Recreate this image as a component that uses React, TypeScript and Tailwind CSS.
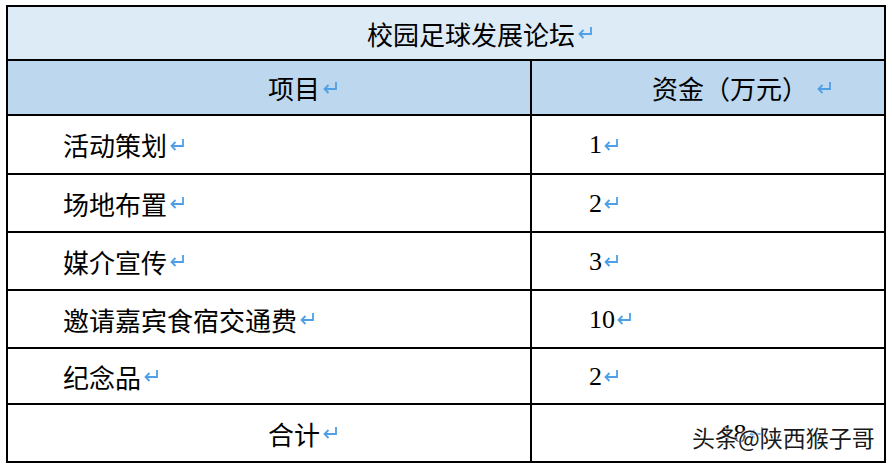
import React from "react";

const cjk = { fontFamily: '"Noto Sans CJK SC", sans-serif' };
const num = { fontFamily: '"Liberation Serif", "Noto Sans CJK SC", serif' };

// Word paragraph mark
function Mark({ className = "" }: { className?: string }) {
  return (
    <svg
      width="16"
      height="14"
      viewBox="0 0 16 14"
      className={"shrink-0 -mr-[16px] " + className}
      fill="none"
      stroke="#4f9fe6"
      strokeWidth="1.8"
    >
      <path d="M14 1 V8 H2.5" />
      <path d="M6.5 4 L2.5 8 L6.5 12" />
    </svg>
  );
}

const rows = [
  { item: "活动策划", amount: "1", h: "h-[59px]" },
  { item: "场地布置", amount: "2", h: "h-[58px]" },
  { item: "媒介宣传", amount: "3", h: "h-[58px]" },
  { item: "邀请嘉宾食宿交通费", amount: "10", h: "h-[58px]" },
  { item: "纪念品", amount: "2", h: "h-[56px]" },
];

export default function App() {
  return (
    <div className="relative w-[892px] h-[466px] bg-white overflow-hidden text-black" style={cjk}>
      <div className="ml-[6px] mt-[5px] w-[880px] border-2 border-black flex flex-col">
        {/* title */}
        <div className="h-[52px] bg-[#ddebf7] flex items-center justify-center pl-[52px] text-[26px]">
          <span>校园足球发展论坛</span>
          <Mark className="ml-[2px]" />
        </div>

        {/* header */}
        <div className="h-[55px] border-t-2 border-black bg-[#bdd7ee] flex text-[26px]">
          <div className="w-[524px] border-r-2 border-black flex items-center justify-center pl-[52px]">
            <span>项目</span>
            <Mark className="ml-[2px]" />
          </div>
          <div className="flex-1 flex items-center justify-center pl-[52px]">
            <span>资金（万元）</span>
            <Mark className="ml-[8px]" />
          </div>
        </div>

        {rows.map((r) => (
          <div key={r.item} className={"border-t-2 border-black flex text-[26px] " + r.h}>
            <div className="w-[524px] border-r-2 border-black flex items-center pl-[55px]">
              <span>{r.item}</span>
              <Mark className="ml-[2px]" />
            </div>
            <div className="flex-1 flex items-center pl-[57px]">
              <span style={num}>{r.amount}</span>
              <Mark className="ml-[1px]" />
            </div>
          </div>
        ))}

        {/* total */}
        <div className="h-[58px] border-t-2 border-black flex text-[26px]">
          <div className="w-[524px] border-r-2 border-black flex items-center justify-center pl-[52px]">
            <span>合计</span>
            <Mark className="ml-[2px]" />
          </div>
          <div className="flex-1 flex items-center justify-center pl-[52px]">
            <span style={num}>18</span>
            <Mark className="ml-[1px]" />
          </div>
        </div>
      </div>

      {/* watermark */}
      <div className="absolute left-[692px] top-[421px] text-[23px] leading-[32px] text-[#1a1a1a] [text-shadow:0_0_2px_#fff,0_0_2px_#fff,0_0_3px_#fff]">
        头条@陕西猴子哥
      </div>
    </div>
  );
}
